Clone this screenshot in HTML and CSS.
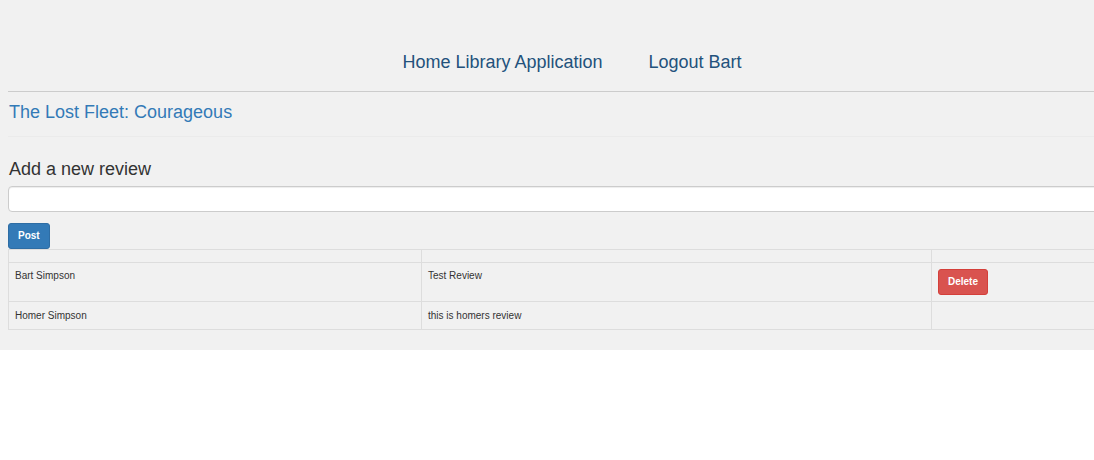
FILE: index.html
```html
<!DOCTYPE html>
<html>
<head>
<meta charset="utf-8">
<link rel="stylesheet" href="styles.css">
</head>
<body>
<div class="page">
  <div class="inner">
    <nav class="nav">
      <a class="nav-link" href="#">Home Library Application</a>
      <a class="nav-link" href="#">Logout Bart</a>
    </nav>
    <hr class="rule-dark">
    <a class="book-title" href="#">The Lost Fleet: Courageous</a>
    <hr class="rule-light">
    <h2 class="section-title">Add a new review</h2>
    <input class="review-input" type="text">
    <button class="btn btn-primary">Post</button>
    <table class="reviews">
      <colgroup>
        <col class="col-user">
        <col class="col-text">
        <col class="col-action">
      </colgroup>
      <thead>
        <tr><th></th><th></th><th></th></tr>
      </thead>
      <tbody>
        <tr>
          <td>Bart Simpson</td>
          <td>Test Review</td>
          <td><button class="btn btn-danger">Delete</button></td>
        </tr>
        <tr>
          <td>Homer Simpson</td>
          <td>this is homers review</td>
          <td></td>
        </tr>
      </tbody>
    </table>
  </div>
</div>
</body>
</html>
```
FILE: styles.css
```css
html, body {
  margin: 0;
  padding: 0;
  background: #ffffff;
  overflow: hidden;
}

body {
  font-family: "Liberation Sans", Arial, sans-serif;
  color: #333333;
}

.page {
  background: #f1f1f1;
  padding: 0 0 20px 8px;
  overflow: hidden;
}

.inner {
  width: 1130px;
  display: flex;
  flex-direction: column;
  align-items: flex-start;
}

.nav {
  align-self: stretch;
  display: flex;
  justify-content: center;
  gap: 46px;
  padding-top: 52px;
  padding-right: 2px;
}

.nav-link {
  font-size: 18px;
  line-height: 20px;
  color: #23527c;
  text-decoration: none;
}

.rule-dark,
.rule-light {
  align-self: stretch;
  border: 0;
  height: 0;
  padding: 0;
}

.rule-dark {
  border-top: 1px solid #cccccc;
  margin: 19px 0 0;
}

.rule-light {
  border-top: 1px solid #ebebeb;
  margin: 14px 0 0;
}

.book-title {
  margin-top: 10px;
  margin-left: 1px;
  font-size: 18px;
  line-height: 20px;
  color: #337ab7;
  text-decoration: none;
}

.section-title {
  margin: 22px 0 0 1px;
  font-size: 18px;
  line-height: 20px;
  font-weight: normal;
  color: #333333;
}

.review-input {
  align-self: stretch;
  box-sizing: border-box;
  margin: 7px 0 0;
  height: 26px;
  padding: 3px 8px;
  border: 1px solid #cccccc;
  border-radius: 4px;
  background: #ffffff;
  box-shadow: inset 0 1px 1px rgba(0, 0, 0, 0.075);
  font: inherit;
  font-size: 12px;
}

.btn {
  box-sizing: border-box;
  height: 26px;
  padding: 0 9px;
  border: 1px solid transparent;
  border-radius: 3px;
  font-family: "Liberation Sans", Arial, sans-serif;
  font-size: 10px;
  font-weight: bold;
  line-height: 24px;
  color: #ffffff;
  cursor: pointer;
}

.btn-primary {
  margin-top: 11px;
  background: #337ab7;
  border-color: #2e6da4;
}

.btn-danger {
  display: block;
  background: #d9534f;
  border-color: #d43f3a;
}

.reviews {
  width: 1130px;
  border-collapse: collapse;
  table-layout: fixed;
  font-size: 10px;
  line-height: 15px;
  color: #333333;
}

.col-user { width: 413px; }
.col-text { width: 510px; }
.col-action { width: 207px; }

.reviews th,
.reviews td {
  border: 1px solid #dddddd;
  padding: 6px;
  vertical-align: top;
  text-align: left;
}

.reviews th {
  height: 0;
  padding: 6px;
}

.reviews tbody tr:first-child td:not(:last-child) {
  padding-top: 5px;
}
```
